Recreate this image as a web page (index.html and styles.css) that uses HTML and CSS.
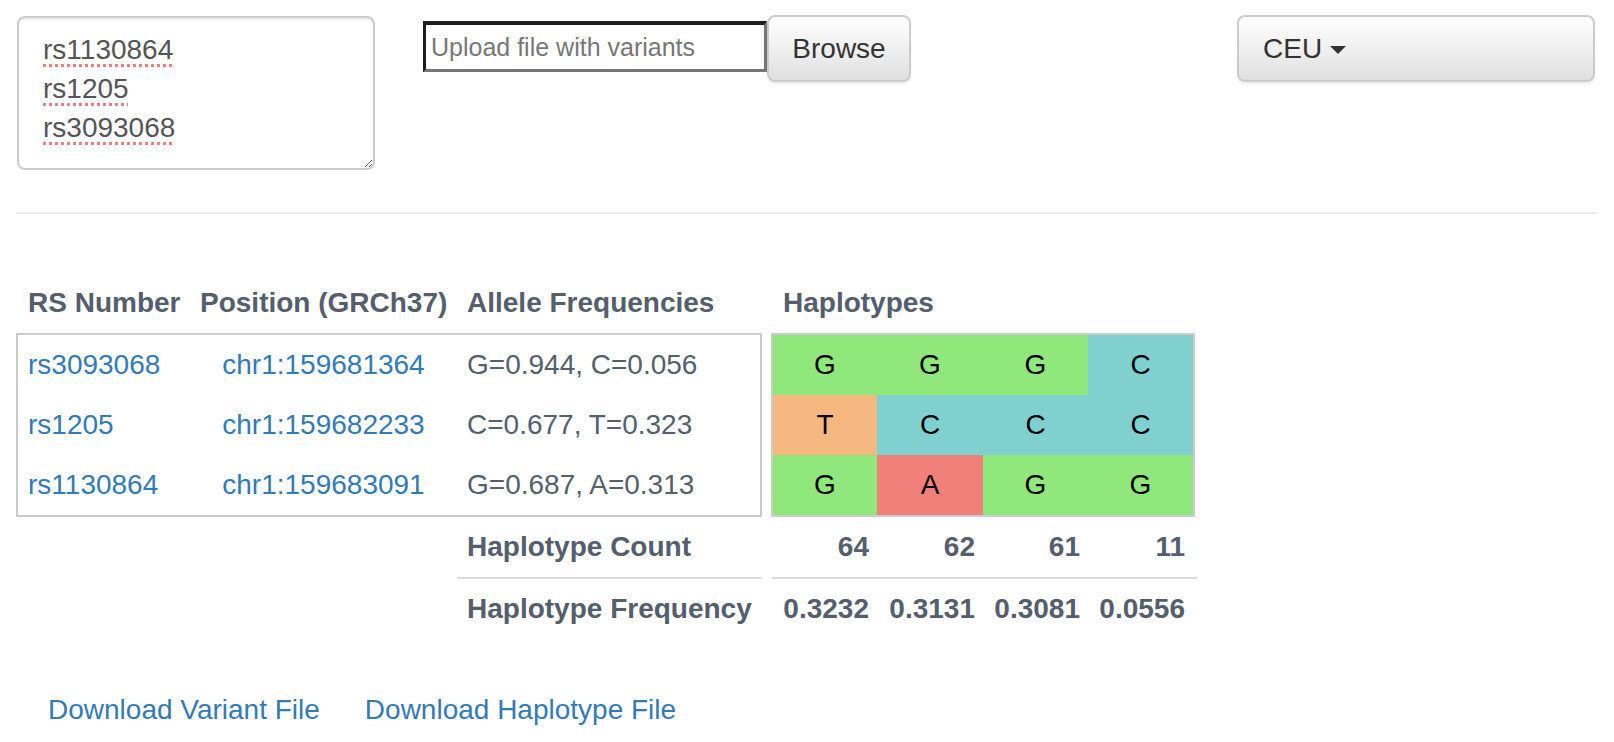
FILE: index.html
```html
<!DOCTYPE html>
<html lang="en">
<head>
<meta charset="utf-8">
<title>Haplotypes</title>
<link rel="stylesheet" href="styles.css">
</head>
<body>
<div class="page">
  <div class="controls">
    <textarea class="variants-input" spellcheck="false">rs1130864
rs1205
rs3093068</textarea>
    <div class="upload">
      <input class="upload-field" type="text" placeholder="Upload file with variants">
      <button class="btn btn-browse" type="button">Browse</button>
    </div>
    <button class="btn btn-pop" type="button">CEU<span class="caret"></span></button>
  </div>

  <hr class="divider">

  <div class="results">
    <div class="head-row">
      <div class="hcell col-rs">RS Number</div>
      <div class="hcell col-pos">Position (GRCh37)</div>
      <div class="hcell col-allele">Allele Frequencies</div>
      <div class="hcell col-hap">Haplotypes</div>
    </div>

    <div class="body-row">
      <div class="variants">
        <div class="vrow">
          <a class="vcell vrs link" href="#">rs3093068</a>
          <a class="vcell vpos link" href="#">chr1:159681364</a>
          <div class="vcell vallele">G=0.944, C=0.056</div>
        </div>
        <div class="vrow">
          <a class="vcell vrs link" href="#">rs1205</a>
          <a class="vcell vpos link" href="#">chr1:159682233</a>
          <div class="vcell vallele">C=0.677, T=0.323</div>
        </div>
        <div class="vrow">
          <a class="vcell vrs link" href="#">rs1130864</a>
          <a class="vcell vpos link" href="#">chr1:159683091</a>
          <div class="vcell vallele">G=0.687, A=0.313</div>
        </div>
      </div>

      <div class="haps">
        <div class="hap g">G</div>
        <div class="hap g">G</div>
        <div class="hap g">G</div>
        <div class="hap c">C</div>
        <div class="hap t">T</div>
        <div class="hap c">C</div>
        <div class="hap c">C</div>
        <div class="hap c">C</div>
        <div class="hap g">G</div>
        <div class="hap a">A</div>
        <div class="hap g">G</div>
        <div class="hap g">G</div>
      </div>
    </div>

    <div class="summary">
      <div class="srow">
        <div class="slabel">Haplotype Count</div>
        <div class="svalues">
          <div class="sval">64</div>
          <div class="sval">62</div>
          <div class="sval">61</div>
          <div class="sval">11</div>
        </div>
      </div>
      <div class="srow srow-last">
        <div class="slabel">Haplotype Frequency</div>
        <div class="svalues">
          <div class="sval">0.3232</div>
          <div class="sval">0.3131</div>
          <div class="sval">0.3081</div>
          <div class="sval">0.0556</div>
        </div>
      </div>
    </div>
  </div>

  <div class="downloads">
    <a class="link" href="#">Download Variant File</a>
    <a class="link" href="#">Download Haplotype File</a>
  </div>
</div>
</body>
</html>
```

FILE: styles.css
```css
* {
  box-sizing: border-box;
}

html, body {
  margin: 0;
  padding: 0;
  background: #fff;
}

body {
  font-family: "Liberation Sans", Arial, sans-serif;
  font-size: 28px;
  line-height: 40px;
  color: #555f6d;
}

.page {
  width: 1614px;
}

/* ---------- top controls ---------- */
.controls {
  display: flex;
  align-items: flex-start;
  padding: 15px 0 0 17px;
}

.variants-input {
  display: block;
  margin-top: 1px;
  width: 358px;
  height: 154px;
  padding: 12px 24px;
  border: 2px solid #ccc;
  border-radius: 8px;
  box-shadow: inset 0 2px 2px rgba(0, 0, 0, 0.075);
  font-family: "Liberation Sans", Arial, sans-serif;
  font-size: 28px;
  line-height: 39px;
  color: #555;
  background: #fff;
  text-decoration: underline dotted #f08080;
  text-decoration-thickness: 3px;
  text-underline-offset: 5px;
  outline: none;
}

.upload {
  display: flex;
  align-items: flex-start;
  margin-left: 48px;
}

.upload-field {
  margin: 6px 0 0 0;
  width: 344px;
  height: 51px;
  padding: 0 5px;
  border-style: solid;
  border-width: 4px 3px 3px 3px;
  border-color: #1e1e1e #777 #777 #1e1e1e;
  font-family: "Liberation Sans", Arial, sans-serif;
  font-size: 25px;
  color: #333;
  background: #fff;
  outline: none;
}

.upload-field::placeholder {
  color: #777;
}

.btn {
  display: flex;
  align-items: center;
  height: 67px;
  padding: 0 24px;
  border: 2px solid #ccc;
  border-radius: 8px;
  background: linear-gradient(to bottom, #ffffff 0%, #e0e0e0 100%);
  box-shadow: inset 0 2px 0 rgba(255, 255, 255, 0.15), 0 2px 2px rgba(0, 0, 0, 0.075);
  font-family: "Liberation Sans", Arial, sans-serif;
  font-size: 28px;
  line-height: 40px;
  color: #333;
  cursor: pointer;
}

.btn-browse {
  width: 144px;
  justify-content: center;
  padding: 0;
}

.btn-pop {
  margin-left: 326px;
  width: 358px;
  padding-left: 24px;
}

.caret {
  display: inline-block;
  width: 0;
  height: 0;
  margin-left: 8px;
  margin-top: 2px;
  border-top: 8px solid #333;
  border-left: 8px solid transparent;
  border-right: 8px solid transparent;
}

.divider {
  margin: 42px 16px 0 16px;
  height: 0;
  border: 0;
  border-top: 2px solid #eee;
}

/* ---------- results ---------- */
.results {
  margin: 59px 0 0 16px;
}

.head-row {
  display: flex;
  height: 60px;
  align-items: center;
  font-weight: bold;
  color: #545e6c;
}

.hcell {
  padding: 0 10px;
  white-space: nowrap;
}

.col-rs { width: 174px; padding-left: 12px; }
.col-pos { width: 267px; text-align: center; }
.col-allele { width: 305px; }
.col-hap { width: 424px; margin-left: 9px; padding-left: 12px; }

.body-row {
  display: flex;
  align-items: flex-start;
}

.variants {
  width: 746px;
  border: 2px solid #ccc;
}

.vrow {
  display: flex;
  height: 60px;
  align-items: center;
}

.vcell {
  padding: 0 10px;
  white-space: nowrap;
}

.vrs { width: 172px; }
.vpos { width: 267px; text-align: center; }
.vallele { width: 303px; }

.link {
  color: #337ab7;
  text-decoration: none;
}

.haps {
  margin-left: 9px;
  width: 424px;
  border: 2px solid #ccc;
  display: grid;
  grid-template-columns: 104px 106px 105px 105px;
  grid-auto-rows: 60px;
}

.hap {
  display: flex;
  align-items: center;
  justify-content: center;
  color: #000;
}

.hap.g { background: #90e87c; }
.hap.c { background: #80d0d0; }
.hap.t { background: #f4b880; }
.hap.a { background: #f08079; }

/* ---------- summary ---------- */
.summary {
  margin-left: 441px;
  font-weight: bold;
  color: #545e6c;
}

.srow {
  display: flex;
  height: 62px;
  align-items: center;
}

.srow-last {
  height: 60px;
}

.slabel {
  width: 305px;
  height: 100%;
  display: flex;
  align-items: center;
  padding-left: 10px;
  white-space: nowrap;
  border-bottom: 2px solid #ddd;
}

.svalues {
  margin-left: 10px;
  width: 425px;
  height: 100%;
  padding-left: 1px;
  display: grid;
  grid-template-columns: 105px 106px 105px 105px;
  border-bottom: 2px solid #ddd;
}

.srow-last .slabel,
.srow-last .svalues {
  border-bottom: 0;
}

.sval {
  display: flex;
  align-items: center;
  justify-content: flex-end;
  padding-right: 9px;
}

.downloads {
  display: flex;
  gap: 45px;
  margin: 51px 0 0 48px;
}
```
